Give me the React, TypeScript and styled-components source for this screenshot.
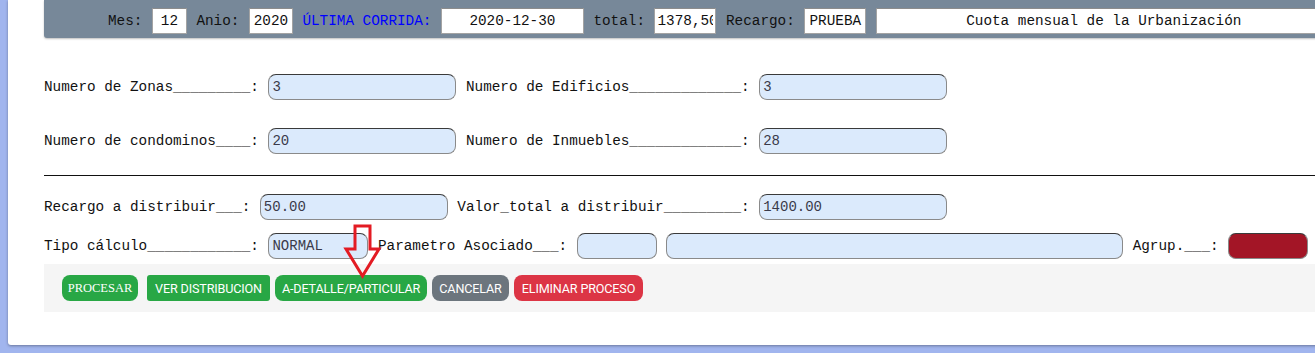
import React from 'react'
import styled, { createGlobalStyle } from 'styled-components'

const GlobalStyle = createGlobalStyle`
  html, body {
    margin: 0;
    height: 353px;
    overflow: hidden;
    background: #a1b5ee;
  }
  body {
    padding: 0 0 8px 8px;
    box-sizing: border-box;
  }
`

const Card = styled.div`
  position: relative;
  width: 1400px;
  height: 345px;
  background: #ffffff;
  border-radius: 0 0 0 3px;
  box-shadow: 0 1px 3px rgba(0, 0, 0, 0.35);
  padding-left: 36px;
  box-sizing: border-box;
  display: flex;
  flex-direction: column;
`

const HeaderBar = styled.div`
  height: 38px;
  box-sizing: border-box;
  padding: 4px 0 0 64px;
  background: #778899;
  border-radius: 0 0 0 3px;
  box-shadow: 0 1px 2px rgba(0, 0, 0, 0.25);
  display: flex;
  align-items: center;
  gap: 9.5px;
`

const mono = `"Liberation Mono", "Courier New", monospace`

const HeadLabel = styled.span<{ $blue?: boolean }>`
  font-family: ${mono};
  font-size: 14.33px;
  color: ${p => (p.$blue ? '#0000ff' : '#111')};
  white-space: pre;
`

const HeadInput = styled.input<{ $w: number; $left?: boolean }>`
  width: ${p => p.$w}px;
  height: 26px;
  box-sizing: border-box;
  padding: 0 2px;
  border: 1px solid #a3a3a3;
  border-top-color: #8c8c8c;
  background: #fff;
  font-family: ${mono};
  font-size: 14.33px;
  color: #111;
  text-align: ${p => (p.$left ? 'left' : 'center')};
  outline: none;
`

const Form = styled.div`
  display: flex;
  flex-direction: column;
  margin-top: 36px;
`

const Row = styled.div<{ $mt?: number }>`
  display: flex;
  align-items: center;
  gap: 9.5px;
  margin-top: ${p => p.$mt ?? 0}px;
  height: 26px;
`

const Label = styled.span`
  font-family: ${mono};
  font-size: 14.33px;
  color: #111;
  white-space: pre;
`

const Field = styled.input<{ $w: number; $red?: boolean }>`
  width: ${p => p.$w}px;
  height: 26px;
  box-sizing: border-box;
  padding: 0 3px;
  border: 1px solid #8a8a8a;
  border-top-color: #3a3a3a;
  border-radius: 8px;
  background: ${p => (p.$red ? '#a31526' : '#dbeafc')};
  font-family: ${mono};
  font-size: 14px;
  color: #3a3a4a;
  outline: none;
`

const Rule = styled.hr`
  margin: 21px 0 0 0;
  border: none;
  border-top: 1px solid #111;
  height: 0;
`

const ButtonBar = styled.div`
  margin-top: 5px;
  height: 48px;
  background: #f5f5f5;
  display: flex;
  align-items: center;
  padding-left: 18px;
  gap: 5px;
`

const Button = styled.button<{ $bg: string; $w: number; $serif?: boolean; $square?: boolean; $ml?: number }>`
  width: ${p => p.$w}px;
  height: 26px;
  border: none;
  border-radius: ${p => (p.$square ? 3 : 8)}px;
  background: ${p => p.$bg};
  color: #fff;
  padding: 0;
  margin-left: ${p => p.$ml ?? 0}px;
  font-family: ${p => (p.$serif ? '"Liberation Serif", serif' : 'Roboto, Arial, sans-serif')};
  font-size: ${p => (p.$serif ? 12.5 : 12.6)}px;
  letter-spacing: ${p => (p.$serif ? 0 : -0.15)}px;
  white-space: nowrap;
`

const Arrow = styled.svg`
  position: absolute;
  left: 330px;
  top: 218px;
  pointer-events: none;
`

function App() {
  return (
    <>
      <GlobalStyle />
      <Card>
        <HeaderBar>
          <HeadLabel>Mes:</HeadLabel>
          <HeadInput $w={35} defaultValue="12" />
          <HeadLabel>Anio:</HeadLabel>
          <HeadInput $w={44} defaultValue="2020" />
          <HeadLabel $blue>ÚLTIMA CORRIDA:</HeadLabel>
          <HeadInput $w={143} defaultValue="2020-12-30" />
          <HeadLabel>total:</HeadLabel>
          <HeadInput $w={62} $left defaultValue="1378,50" />
          <HeadLabel>Recargo:</HeadLabel>
          <HeadInput $w={62} defaultValue="PRUEBA" />
          <HeadInput $w={456} defaultValue="Cuota mensual de la Urbanización" />
        </HeaderBar>

        <Form>
          <Row>
            <Label>Numero de Zonas_________:</Label>
            <Field $w={188} defaultValue="3" />
            <Label>Numero de Edificios_____________:</Label>
            <Field $w={188} defaultValue="3" />
          </Row>
          <Row $mt={28}>
            <Label>Numero de condominos____:</Label>
            <Field $w={188} defaultValue="20" />
            <Label>Numero de Inmuebles_____________:</Label>
            <Field $w={188} defaultValue="28" />
          </Row>

          <Rule />

          <Row $mt={18}>
            <Label>Recargo a distribuir___:</Label>
            <Field $w={188} defaultValue="50.00" />
            <Label>Valor_total a distribuir_________:</Label>
            <Field $w={188} defaultValue="1400.00" />
          </Row>
          <Row $mt={13}>
            <Label>Tipo cálculo____________:</Label>
            <Field $w={100} defaultValue="NORMAL" />
            <Label>Parametro Asociado___:</Label>
            <Field $w={80} />
            <Field $w={457} />
            <Label>Agrup.___:</Label>
            <Field $w={80} $red />
          </Row>

          <ButtonBar>
            <Button $bg="#28a745" $w={76} $serif>PROCESAR</Button>
            <Button $bg="#28a745" $w={123} $square $ml={4}>VER DISTRIBUCION</Button>
            <Button $bg="#28a745" $w={152}>A-DETALLE/PARTICULAR</Button>
            <Button $bg="#6c757d" $w={77}>CANCELAR</Button>
            <Button $bg="#dc3545" $w={129}>ELIMINAR PROCESO</Button>
          </ButtonBar>
        </Form>

        <Arrow width="60" height="66" viewBox="0 0 60 66">
          <polygon
            points="17,8 32,8 32,31 41,31 24.5,58 8,31 17,31"
            fill="none"
            stroke="#e31b23"
            strokeWidth="3"
          />
        </Arrow>
      </Card>
    </>
  )
}

export default App
